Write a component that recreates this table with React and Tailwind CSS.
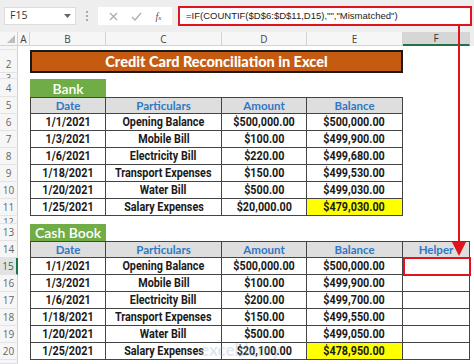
import React from "react";

const COLS = "grid-cols-[18px_12px_76px_116px_85px_96px_67px_4px]";
const ROWS =
  "grid-rows-[14px_4px_23px_6px_18px_17px_17px_17px_17px_17px_17px_17px_8px_17px_17px_17px_17px_17px_17px_17px_17px_4px]";

const bank = [
  ["1/1/2021", "Opening Balance", "$500,000.00", "$500,000.00"],
  ["1/3/2021", "Mobile Bill", "$100.00", "$499,900.00"],
  ["1/6/2021", "Electricity Bill", "$220.00", "$499,680.00"],
  ["1/18/2021", "Transport Expenses", "$150.00", "$499,530.00"],
  ["1/20/2021", "Water Bill", "$500.00", "$499,030.00"],
  ["1/25/2021", "Salary Expenses", "$20,000.00", "$479,030.00"],
];
const cash = [
  ["1/1/2021", "Opening Balance", "$500,000.00", "$500,000.00"],
  ["1/3/2021", "Mobile Bill", "$100.00", "$499,900.00"],
  ["1/6/2021", "Electricity Bill", "$200.00", "$499,700.00"],
  ["1/18/2021", "Transport Expenses", "$150.00", "$499,550.00"],
  ["1/20/2021", "Water Bill", "$500.00", "$499,050.00"],
  ["1/25/2021", "Salary Expenses", "$20,100.00", "$478,950.00"],
];

const dataFont = { fontFamily: "Roboto, 'Liberation Sans', sans-serif" };
const headFont = { fontFamily: "Lato, 'Open Sans', sans-serif" };
const uiFont = { fontFamily: "'Open Sans', 'Liberation Sans', sans-serif" };

function RowNum({ n, active, clip, bottom }) {
  return (
    <div
      className={`flex justify-center overflow-hidden border-b border-[#e3e3e3] text-[10px] leading-none text-[#666] ${
        bottom ? "items-end pb-[3px]" : "items-center"
      } ${
        active ? "border-r-2 border-r-[#217346] bg-[#e2e2e2] text-[#217346]" : "border-r border-r-[#d4d4d4] bg-[#f6f6f6]"
      }`}
      style={uiFont}
    >
      {clip ? (
        <span className="h-[6px] overflow-hidden text-[9px] leading-[9px]">{n}</span>
      ) : (
        <span>{n}</span>
      )}
    </div>
  );
}

function Blank() {
  return <div />;
}

function TCell({ children, first, top, yellow, head }) {
  return (
    <div
      className={`flex items-center justify-center whitespace-nowrap border-b border-r border-[#444] ${
        first ? "border-l" : ""
      } ${top ? "border-t" : ""} ${yellow ? "bg-[#ffff00]" : head ? "bg-[#dedede]" : "bg-white"} ${
        head ? "text-[11.5px] font-bold text-[#2f78c4]" : "text-[13px] font-bold text-[#1a1a1a]"
      }`}
      style={head ? headFont : dataFont}
    >
      {head || children === undefined ? children : <span className="inline-block scale-x-[0.83]">{children}</span>}
    </div>
  );
}

function Table({ rows, startRow, helper }) {
  const heads = ["Date", "Particulars", "Amount", "Balance"];
  const out = [];
  out.push(<RowNum key={`h${startRow}`} n={startRow} />);
  out.push(<Blank key={`ha${startRow}`} />);
  heads.forEach((h, i) =>
    out.push(
      <TCell key={`hh${i}`} head top first={i === 0}>
        {h}
      </TCell>
    )
  );
  if (helper) {
    out.push(
      <TCell key="helper" head top>
        Helper
      </TCell>
    );
  } else out.push(<Blank key="hf" />);
  out.push(<Blank key="hp" />);
  rows.forEach((r, ri) => {
    const n = startRow + 1 + ri;
    out.push(<RowNum key={`n${n}`} n={n} active={helper && ri === 0} />);
    out.push(<Blank key={`a${n}`} />);
    r.forEach((v, ci) => {
      out.push(
        <TCell key={`c${n}-${ci}`} first={ci === 0} yellow={ri === 5 && ci === 3}>
          {v}
        </TCell>
      );
    });
    if (helper) out.push(<TCell key={`f${n}`} />);
    else out.push(<Blank key={`f${n}`} />);
    out.push(<Blank key={`p${n}`} />);
  });
  return out;
}

function ColHead({ label, active }) {
  return (
    <div
      className={`flex items-center justify-center border-r border-[#d4d4d4] text-[10px] leading-none ${
        active ? "border-b-2 border-b-[#217346] bg-[#d6d6d6] text-[#333]" : "border-b border-b-[#d4d4d4] bg-[#f6f6f6] text-[#444]"
      }`}
      style={uiFont}
    >
      {label}
    </div>
  );
}

export default function App() {
  return (
    <div className="relative h-[364px] w-[474px] overflow-hidden bg-white">
      {/* Formula bar */}
      <div className="flex h-[32px] items-center gap-[6px] bg-[#eeeeee] pl-[4px] pr-[2px]" style={uiFont}>
        <div className="flex h-[18px] w-[72px] items-center justify-between border border-[#dcdcdc] bg-white pl-[5px] pr-[4px] text-[10.5px] text-[#333]">
          <span>F15</span>
          <svg width="7" height="4" viewBox="0 0 7 4">
            <path d="M0 0 L7 0 L3.5 4 Z" fill="#666" />
          </svg>
        </div>
        <div className="flex w-[10px] flex-col items-center gap-[2px]">
          <span className="h-[2px] w-[2px] bg-[#aaa]" />
          <span className="h-[2px] w-[2px] bg-[#aaa]" />
          <span className="h-[2px] w-[2px] bg-[#aaa]" />
        </div>
        <div className="flex h-[18px] w-[74px] items-center justify-around bg-white px-[4px] text-[#999]">
          <svg width="9" height="9" viewBox="0 0 9 9">
            <path d="M1 1 L8 8 M8 1 L1 8" stroke="#aaa" strokeWidth="1.2" />
          </svg>
          <svg width="11" height="9" viewBox="0 0 11 9">
            <path d="M1 5 L4 8 L10 1" stroke="#aaa" strokeWidth="1.2" fill="none" />
          </svg>
          <span className="text-[10px] italic text-[#555]" style={{ fontFamily: "'Liberation Serif', serif" }}>
            f<span className="text-[7px]">x</span>
          </span>
        </div>
        <div
          className="flex h-[20px] flex-1 items-center border-2 border-[#e0141e] bg-white pl-[6px] text-[9.5px] text-[#222]"
          style={{ fontFamily: "'Liberation Sans', Arial, sans-serif" }}
        >
          =IF(COUNTIF($D$6:$D$11,D15),"","Mismatched")
        </div>
      </div>

      {/* Sheet grid */}
      <div className={`grid ${COLS} ${ROWS}`}>
        {/* column header row */}
        <div className="relative border-b border-r border-[#d4d4d4] bg-[#f6f6f6]">
          <svg className="absolute bottom-[2px] right-[2px]" width="8" height="8" viewBox="0 0 8 8">
            <path d="M8 0 L8 8 L0 8 Z" fill="#bdbdbd" />
          </svg>
        </div>
        <ColHead label="A" />
        <ColHead label="B" />
        <ColHead label="C" />
        <ColHead label="D" />
        <ColHead label="E" />
        <ColHead label="F" active />
        <div className="bg-[#eeeeee]" />

        {/* row 1 (tiny) */}
        <RowNum n="" />
        <Blank />
        <div className="col-span-4" />
        <Blank />
        <Blank />

        {/* row 2 title */}
        <RowNum n={2} bottom />
        <Blank />
        <div
          className="col-span-4 flex items-center justify-center border-2 border-[#1a1a1a] bg-[#c55a11] text-[14.5px] font-black text-white"
          style={headFont}
        >
          Credit Card Reconciliation in Excel
        </div>
        <Blank />
        <Blank />

        {/* row 3 */}
        <RowNum n={3} clip />
        <Blank />
        <div className="col-span-4" />
        <Blank />
        <Blank />

        {/* row 4 Bank */}
        <RowNum n={4} />
        <Blank />
        <div className="flex items-center justify-center bg-[#70ad47] text-[14px] font-semibold text-white" style={headFont}>
          Bank
        </div>
        <Blank />
        <Blank />
        <Blank />
        <Blank />
        <Blank />

        {Table({ rows: bank, startRow: 5, helper: false })}

        {/* row 12 */}
        <RowNum n={12} clip />
        <Blank />
        <div className="col-span-4" />
        <Blank />
        <Blank />

        {/* row 13 Cash Book */}
        <RowNum n={13} />
        <Blank />
        <div className="flex items-center justify-center bg-[#70ad47] text-[14px] font-semibold text-white" style={headFont}>
          Cash Book
        </div>
        <Blank />
        <Blank />
        <Blank />
        <Blank />
        <Blank />

        {Table({ rows: cash, startRow: 14, helper: true })}

        <RowNum n="" />
        <Blank />
        <div className="col-span-4" />
        <Blank />
        <Blank />
      </div>

      {/* Watermark */}
      <div
        className="pointer-events-none absolute left-[200px] top-[337px] text-[17px] font-bold text-[#9fb3c8] opacity-30"
        style={headFont}
      >
        exceldemy
      </div>

      {/* Red highlight on F15 */}
      <div className="pointer-events-none absolute left-[403px] top-[257px] h-[19px] w-[68px] border-2 border-[#e0141e]" />

      {/* Red arrow */}
      <svg className="pointer-events-none absolute left-0 top-0" width="474" height="364">
        <line x1="459" y1="25" x2="459" y2="244" stroke="#e0141e" strokeWidth="2" />
        <path d="M452 242 L466 242 L459 256 Z" fill="#e0141e" />
      </svg>
    </div>
  );
}
